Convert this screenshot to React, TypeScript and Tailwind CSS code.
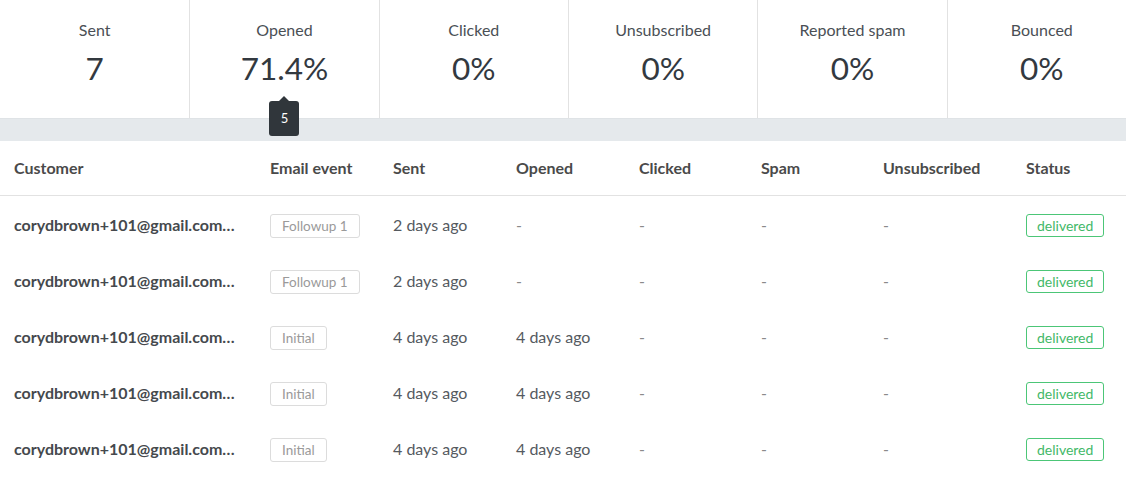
const stats = [
  { label: 'Sent', value: '7' },
  { label: 'Opened', value: '71.4%', tip: '5' },
  { label: 'Clicked', value: '0%' },
  { label: 'Unsubscribed', value: '0%' },
  { label: 'Reported spam', value: '0%' },
  { label: 'Bounced', value: '0%' },
];

const rows = [
  { event: 'Followup 1', sent: '2 days ago', opened: '-' },
  { event: 'Followup 1', sent: '2 days ago', opened: '-' },
  { event: 'Initial', sent: '4 days ago', opened: '4 days ago' },
  { event: 'Initial', sent: '4 days ago', opened: '4 days ago' },
  { event: 'Initial', sent: '4 days ago', opened: '4 days ago' },
];

const cols = 'grid grid-cols-[256px_123px_123px_123px_122px_122px_143px_1fr] [&>div]:pl-[14px]';

export default function App() {
  return (
    <div className="w-[1126px] h-[477px] overflow-hidden bg-white font-['Lato',sans-serif]">
      <div className="w-[1136px] grid grid-cols-6 border-b border-[#dfe3e6]">
        {stats.map((s, i) => (
          <div
            key={s.label}
            className={`relative h-[118px] flex flex-col items-center pt-[20px] ${i > 0 ? 'border-l border-[#e2e2e2]' : ''}`}
          >
            <span className="text-[16px] leading-5 text-[#4a4f55]">{s.label}</span>
            <span className="mt-[8px] text-[31.5px] leading-[40px] text-[#33393f]">{s.value}</span>
            {s.tip && (
              <div className="absolute z-10 left-1/2 -translate-x-1/2 top-[101px] w-[30px] h-[35px] rounded-[3px] bg-[#30363b] flex items-center justify-center">
                <span className="absolute -top-[5px] left-1/2 -translate-x-1/2 w-0 h-0 border-x-[5px] border-x-transparent border-b-[5px] border-b-[#30363b]" />
                <span className="text-[13px] text-white">{s.tip}</span>
              </div>
            )}
          </div>
        ))}
      </div>
      <div className="h-[22px] bg-[#e5e9ec]" />
      <div className={`${cols} h-[55px] items-center border-b border-[#e2e2e2] text-[16px] font-bold text-[#4a4a4a]`}>
        {['Customer', 'Email event', 'Sent', 'Opened', 'Clicked', 'Spam', 'Unsubscribed', 'Status'].map(h => (
          <div key={h}>{h}</div>
        ))}
      </div>
      {rows.map((r, i) => (
        <div key={i} className={`${cols} h-[56px] pt-[2px] items-center text-[16px] text-[#555a5f]`}>
          <div className="font-bold text-[#45494d] whitespace-nowrap">corydbrown+101@gmail.com…</div>
          <div>
            <span className="inline-block px-[11px] h-[24px] leading-[22px] border border-[#dcdcdc] rounded-[3px] text-[13.5px] text-[#9a9a9a]">
              {r.event}
            </span>
          </div>
          <div>{r.sent}</div>
          <div className={r.opened === '-' ? 'text-[#8a8a8a]' : ''}>{r.opened}</div>
          <div className="text-[#8a8a8a]">-</div>
          <div className="text-[#8a8a8a]">-</div>
          <div className="text-[#8a8a8a]">-</div>
          <div>
            <span className="inline-block px-[10px] h-[23px] leading-[21px] border border-[#4cc677] rounded-[3px] text-[14px] text-[#43b868]">
              delivered
            </span>
          </div>
        </div>
      ))}
    </div>
  );
}
